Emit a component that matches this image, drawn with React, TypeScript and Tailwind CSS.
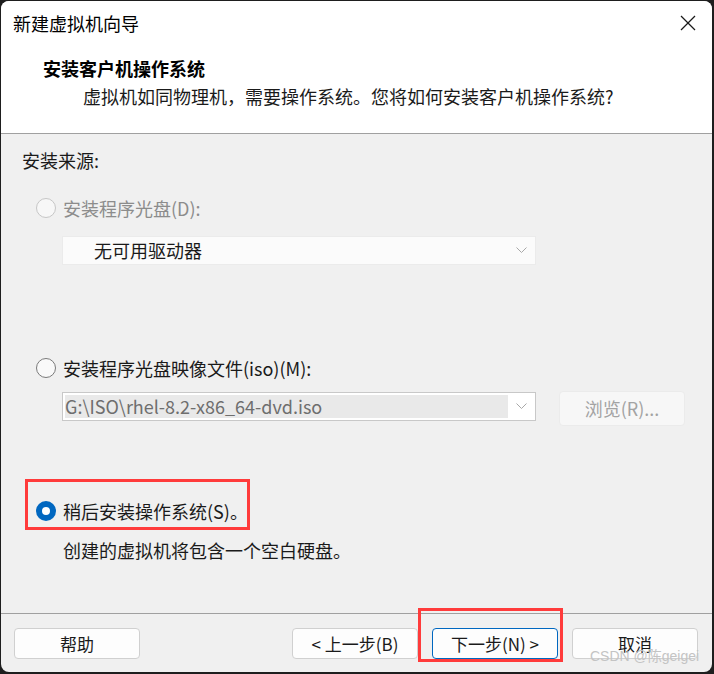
import React from "react";

const font = "font-['Noto_Sans_CJK_SC','Noto_Sans',sans-serif]";

const Radio = ({checked, disabled}: {checked?: boolean; disabled?: boolean}) => {
  if (checked) {
    return (
      <div className="w-5 h-5 rounded-full bg-[#0067c0] flex items-center justify-center shrink-0">
        <div className="w-2 h-2 rounded-full bg-white" />
      </div>
    );
  }
  return (
    <div
      className={
        disabled
          ? "w-5 h-5 rounded-full border border-[#c6c6c6] bg-[#f7f7f7] shrink-0"
          : "w-5 h-5 rounded-full border border-[#7a7a7a] bg-[#f9f9f9] shrink-0"
      }
    />
  );
};

const Chevron = () => (
  <svg width="11" height="7" viewBox="0 0 11 7" fill="none">
    <polyline points="0.5,0.5 5.5,5.5 10.5,0.5" stroke="#a8a8a8" strokeWidth="1" />
  </svg>
);

const FooterButton = ({label, primary}: {label: string; primary?: boolean}) => (
  <div
    className={
      primary
        ? "w-[126px] h-[31px] rounded-[4px] border border-[#0067c0] bg-[#fdfdfd] flex items-center justify-center text-[17px] text-[#1a1a1a]"
        : "w-[126px] h-[31px] rounded-[4px] border border-[#d0d0d0] bg-[#fdfdfd] flex items-center justify-center text-[17px] text-[#1a1a1a]"
    }
  >
    {label}
  </div>
);

export default function App() {
  return (
    <div className={`relative w-[714px] h-[674px] bg-[#1e1e1e] p-px ${font}`}>
      <div className="w-[711px] h-[671px] rounded-[8px] overflow-hidden bg-[#f0f0f0] flex flex-col">
        {/* white header */}
        <div className="h-[133px] bg-white border-b border-[#a0a0a0] flex flex-col">
          <div className="h-[43px] flex items-center justify-between pl-[12px] pr-[16px]">
            <span className="text-[18px] text-black leading-6">新建虚拟机向导</span>
            <svg width="16" height="16" viewBox="0 0 16 16" fill="none">
              <line x1="1" y1="1" x2="15" y2="15" stroke="#1a1a1a" strokeWidth="1.3" />
              <line x1="15" y1="1" x2="1" y2="15" stroke="#1a1a1a" strokeWidth="1.3" />
            </svg>
          </div>
          <div className="mt-[12px] h-6 flex items-center pl-[42px] text-[18px] font-bold text-black">
            安装客户机操作系统
          </div>
          <div className="mt-[4px] h-6 flex items-center pl-[82px] text-[18px] text-[#1a1a1a]">
            虚拟机如同物理机，需要操作系统。您将如何安装客户机操作系统?
          </div>
        </div>

        {/* body */}
        <div className="flex-1 flex flex-col pl-[21px] pt-[14px]">
          <div className="h-6 flex items-center text-[18px] text-[#1a1a1a]">安装来源:</div>

          <div className="mt-[24px] h-6 flex items-center gap-[7px] ml-[14px] text-[18px] text-[#8c8c8c]">
            <Radio disabled />
            <span>安装程序光盘(D):</span>
          </div>
          <div className="mt-[16px] ml-[40px] w-[474px] h-[29px] bg-[#fbfbfb] border border-[#ebebeb] flex items-center justify-between pl-[31px] pr-[8px] text-[18px] text-[#1a1a1a]">
            <span>无可用驱动器</span>
            <Chevron />
          </div>

          <div className="mt-[91px] h-6 flex items-center gap-[7px] ml-[14px] text-[18px] text-[#1a1a1a]">
            <Radio />
            <span>安装程序光盘映像文件(iso)(M):</span>
          </div>
          <div className="mt-[11px] ml-[40px] h-[35px] flex items-start gap-[23px]">
            <div className="mt-px w-[474px] h-[29px] bg-white border border-[#c8c8c8] flex items-center justify-between pl-[2px] pr-[8px]">
              <div className="w-[443px] h-[23px] bg-[#e9e9e9] flex items-center text-[18px] text-[#6e6e6e]">
                G:\ISO\rhel-8.2-x86_64-dvd.iso
              </div>
              <Chevron />
            </div>
            <div className="w-[126px] h-[35px] rounded-[4px] bg-[#f7f7f7] border border-[#ebebeb] flex items-center justify-center text-[18px] text-[#a3a3a3]">
              浏览(R)...
            </div>
          </div>

          <div className="mt-[73px] h-6 flex items-center gap-[7px] ml-[14px] text-[18px] text-[#1a1a1a]">
            <Radio checked />
            <span>稍后安装操作系统(S)。</span>
          </div>
          <div className="mt-[15px] h-6 flex items-center ml-[41px] text-[18px] text-[#1a1a1a]">
            创建的虚拟机将包含一个空白硬盘。
          </div>
        </div>

        {/* footer */}
        <div className="border-t border-[#a0a0a0] pt-[14px] pb-[13px] pl-[13px] pr-[14px] flex items-center">
          <FooterButton label="帮助" />
          <div className="flex-1" />
          <div className="flex gap-[14px]">
            <FooterButton label="< 上一步(B)" />
            <FooterButton label="下一步(N) >" primary />
            <FooterButton label="取消" />
          </div>
        </div>
      </div>

      {/* annotations */}
      <div className="absolute left-[25px] top-[479px] w-[225px] h-[51px] border-[3px] border-[#ff3b3b]" />
      <div className="absolute left-[418px] top-[608px] w-[145px] h-[54px] border-[3px] border-[#ff3b3b]" />
      <div className="absolute left-[590px] top-[646px] text-[14px] leading-5 text-[#c4c4c4] font-['Liberation_Sans','Noto_Sans_CJK_SC',sans-serif]">
        CSDN @陈geigei
      </div>
    </div>
  );
}
